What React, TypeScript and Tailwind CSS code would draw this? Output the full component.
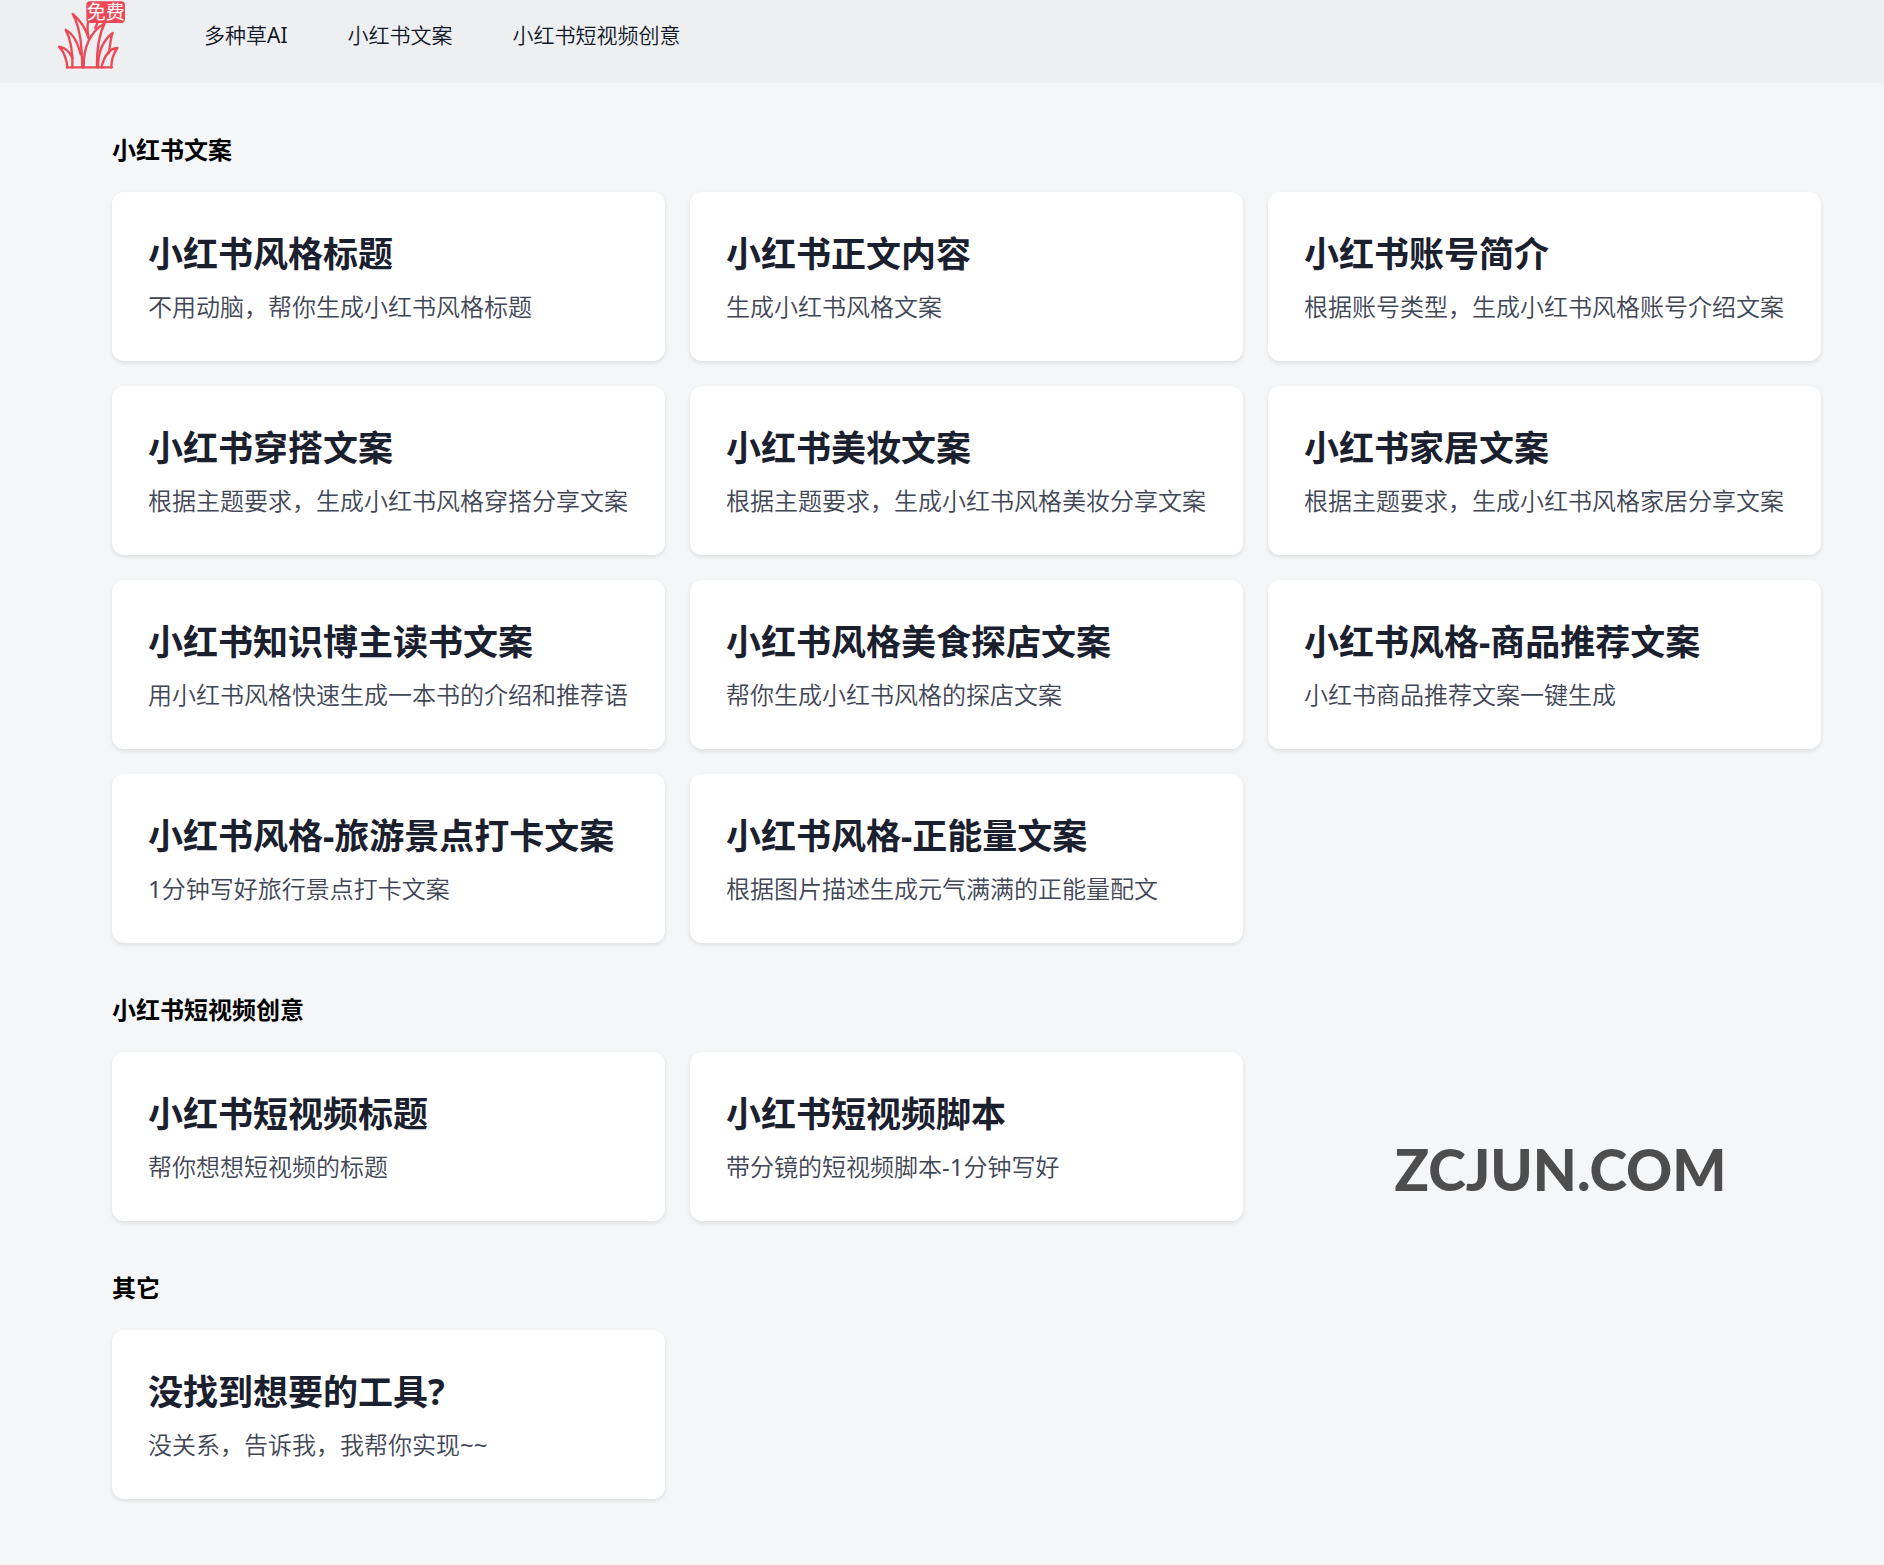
type Tool = { title: string; desc: string }
type Section = { name: string; tools: Tool[]; mark?: string }

const NAV = ['多种草AI', '小红书文案', '小红书短视频创意']

const SECTIONS: Section[] = [
  {
    name: '小红书文案',
    tools: [
      { title: '小红书风格标题', desc: '不用动脑，帮你生成小红书风格标题' },
      { title: '小红书正文内容', desc: '生成小红书风格文案' },
      { title: '小红书账号简介', desc: '根据账号类型，生成小红书风格账号介绍文案' },
      { title: '小红书穿搭文案', desc: '根据主题要求，生成小红书风格穿搭分享文案' },
      { title: '小红书美妆文案', desc: '根据主题要求，生成小红书风格美妆分享文案' },
      { title: '小红书家居文案', desc: '根据主题要求，生成小红书风格家居分享文案' },
      { title: '小红书知识博主读书文案', desc: '用小红书风格快速生成一本书的介绍和推荐语' },
      { title: '小红书风格美食探店文案', desc: '帮你生成小红书风格的探店文案' },
      { title: '小红书风格-商品推荐文案', desc: '小红书商品推荐文案一键生成' },
      { title: '小红书风格-旅游景点打卡文案', desc: '1分钟写好旅行景点打卡文案' },
      { title: '小红书风格-正能量文案', desc: '根据图片描述生成元气满满的正能量配文' },
    ],
  },
  {
    name: '小红书短视频创意',
    tools: [
      { title: '小红书短视频标题', desc: '帮你想想短视频的标题' },
      { title: '小红书短视频脚本', desc: '带分镜的短视频脚本-1分钟写好' },
    ],
    mark: 'ZCJUN.COM',
  },
  {
    name: '其它',
    tools: [{ title: '没找到想要的工具?', desc: '没关系，告诉我，我帮你实现~~' }],
  },
]

function Logo() {
  return (
    <svg viewBox="0 0 300 249" className="w-[100px] shrink-0" role="img" aria-label="免费">
      <g fill="none" stroke="#ec4856" strokeWidth="7" strokeLinejoin="round" strokeLinecap="round">
        <path d="M81 202H215" />
        {/* outer blades */}
        <path d="M82 202C80 176 72 156 57 140C76 143 89 155 97 174" />
        <path d="M214 202C214 178 221 160 232 144C212 145 194 164 184 202" />
        {/* middle blades */}
        <path d="M97 202C99 160 94 122 77 89C98 100 113 126 122 163" />
        <path d="M174 202C174 156 190 120 218 99C210 118 211 140 206 160" />
        {/* tall blades */}
        <path d="M127 202C125 145 123 86 98 42C121 61 138 87 146 115" />
        <path d="M131 202C130 144 151 96 194 70C178 102 170 143 171 202" />
        <path d="M145 112C143 97 141 82 144 66M166 84L172 70" />
      </g>
      <rect x="139" y="4" width="116" height="65" rx="11" fill="#ec4856" />
      <text x="197" y="58" textAnchor="middle" fontSize="57" fill="#fff">
        免费
      </text>
    </svg>
  )
}

function ToolCard({ title, desc }: Tool) {
  return (
    <a href="#" className="block rounded-xl bg-white p-9 shadow-[0_2px_4px_rgba(0,0,0,0.1)]">
      <h3 className="mb-2 text-[35px] leading-[52px] font-bold text-[#1a202e]">{title}</h3>
      <p className="font-['Noto_Sans','Noto_Sans_CJK_SC_DemiLight','Noto_Sans_CJK_SC',sans-serif] text-2xl leading-[37px] text-[#3f4656]">
        {desc}
      </p>
    </a>
  )
}

export default function App() {
  return (
    <div
      lang="zh-CN"
      className="min-h-screen bg-[#f5f6f8] pb-16 font-['Noto_Sans','Noto_Sans_CJK_SC',sans-serif]"
    >
      <header className="flex items-start bg-[#eeeff1] pl-10">
        <Logo />
        <nav className="ml-16 flex gap-[60px] pt-[23px] font-['Noto_Sans','Noto_Sans_CJK_SC_DemiLight','Noto_Sans_CJK_SC',sans-serif]">
          {NAV.map((item) => (
            <a key={item} href="#" className="text-[21px] leading-6 text-[#111827]">
              {item}
            </a>
          ))}
        </nav>
      </header>

      <main className="pr-[63px] pl-28">
        {SECTIONS.map((section) => (
          <section key={section.name}>
            <h2 className="pt-12 pb-6 text-2xl leading-[37px] font-bold text-black">{section.name}</h2>
            <div className="grid grid-cols-3 gap-[25px]">
              {section.tools.map((tool) => (
                <ToolCard key={tool.title} {...tool} />
              ))}
              {section.mark && (
                <div className="flex items-end justify-center pb-7 pl-8">
                  <span className="font-[Lato,sans-serif] text-[57px] leading-[48px] font-black text-[#4d4d4d]">
                    {section.mark}
                  </span>
                </div>
              )}
            </div>
          </section>
        ))}
      </main>
    </div>
  )
}
